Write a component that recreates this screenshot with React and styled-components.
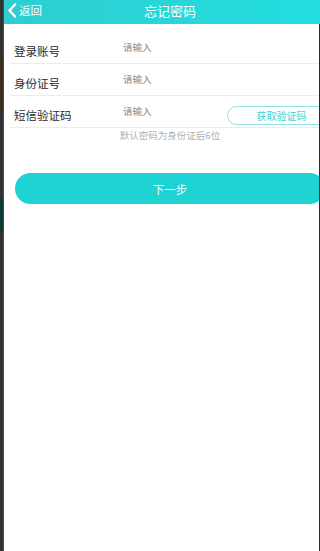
import styled, { createGlobalStyle } from "styled-components";

const GlobalStyle = createGlobalStyle`
  html, body {
    margin: 0;
    padding: 0;
    overflow: hidden;
    background: #fff;
  }
  body {
    font-family: "Noto Sans CJK SC", "Noto Sans", sans-serif;
  }
`;

const Screen = styled.div`
  display: flex;
  width: 320px;
  height: 551px;
  overflow: hidden;
`;

const Strip = styled.div`
  width: 4px;
  flex-shrink: 0;
  display: flex;
  flex-direction: column;
  background: #323232;
  border-right: 1px solid #4a4a4a;
  box-sizing: border-box;
`;

const StripBlock = styled.div`
  height: ${(p) => p.h}px;
  background: ${(p) => p.color};
`;

const Page = styled.div`
  width: 316px;
  flex-shrink: 0;
  display: flex;
  flex-direction: column;
  overflow: hidden;
`;

const Header = styled.header`
  width: 332px;
  height: 24px;
  flex-shrink: 0;
  display: flex;
  align-items: center;
  position: relative;
  background: linear-gradient(90deg, #2ecdd0, #22dfe0);
  color: #fff;
`;

const Back = styled.div`
  display: flex;
  align-items: center;
  gap: 2px;
  padding-left: 3px;
  font-size: 11.5px;
  line-height: 1;
  margin-top: -3px;
`;

const Title = styled.h1`
  position: absolute;
  left: 0;
  right: 0;
  top: 2px;
  margin: 0;
  text-align: center;
  font-size: 13px;
  font-weight: 400;
  line-height: 18px;
  pointer-events: none;
`;

const Body = styled.main`
  flex: 1;
  overflow: hidden;
  background: #fff;
  border-right: 1px solid #2e2e2e;
`;

const Content = styled.div`
  width: 332px;
  padding-top: 8px;
`;

const Row = styled.div`
  display: flex;
  align-items: center;
  height: 31px;
  margin-left: 6px;
  border-bottom: 1px solid #ececec;
`;

const Label = styled.span`
  width: 113px;
  padding-left: 4px;
  box-sizing: border-box;
  margin-top: 7px;
  font-size: 11.5px;
  color: #2a2a2a;
`;

const Placeholder = styled.span`
  flex: 1;
  margin-top: -1px;
  font-size: 9.5px;
  color: #8a8a8a;
`;

const CodeButton = styled.button`
  width: 109px;
  height: 19px;
  margin-top: 8px;
  border: 1px solid #8fe3e4;
  border-radius: 10px;
  background: #fff;
  color: #48cfd1;
  font-family: inherit;
  font-size: 10px;
  padding: 0;
  flex-shrink: 0;
`;

const Hint = styled.p`
  margin: 0;
  text-align: center;
  font-size: 9.5px;
  line-height: 14px;
  color: #b0b0b0;
`;

const NextButton = styled.button`
  display: block;
  width: 310px;
  height: 31px;
  margin: 31px 0 0 11px;
  border: none;
  border-radius: 16px;
  background: #1fd3d5;
  color: #fff;
  font-family: inherit;
  font-size: 11.5px;
  padding: 0;
`;

function Chevron() {
  return (
    <svg width="10" height="15" viewBox="0 0 10 15">
      <path d="M8 1.5L2.5 7.5L8 13.5" fill="none" stroke="#fff" strokeWidth="2.4" strokeLinecap="round" strokeLinejoin="round" />
    </svg>
  );
}

const fields = [
  { label: "登录账号" },
  { label: "身份证号" },
  { label: "短信验证码", code: true },
];

export default function App() {
  return (
    <>
      <GlobalStyle />
      <Screen>
        <Strip>
          <StripBlock h={58} color="#323232" />
          <StripBlock h={52} color="#3a2d1c" />
          <StripBlock h={88} color="#333" />
          <StripBlock h={34} color="#0e3a3a" />
          <StripBlock h={319} color="#323232" />
        </Strip>
        <Page>
          <Header>
            <Back>
              <Chevron />
              <span>返回</span>
            </Back>
            <Title>忘记密码</Title>
          </Header>
          <Body>
            <Content>
              {fields.map((f) => (
                <Row key={f.label}>
                  <Label>{f.label}</Label>
                  <Placeholder>请输入</Placeholder>
                  {f.code && <CodeButton>获取验证码</CodeButton>}
                </Row>
              ))}
              <Hint>默认密码为身份证后6位</Hint>
              <NextButton>下一步</NextButton>
            </Content>
          </Body>
        </Page>
      </Screen>
    </>
  );
}
